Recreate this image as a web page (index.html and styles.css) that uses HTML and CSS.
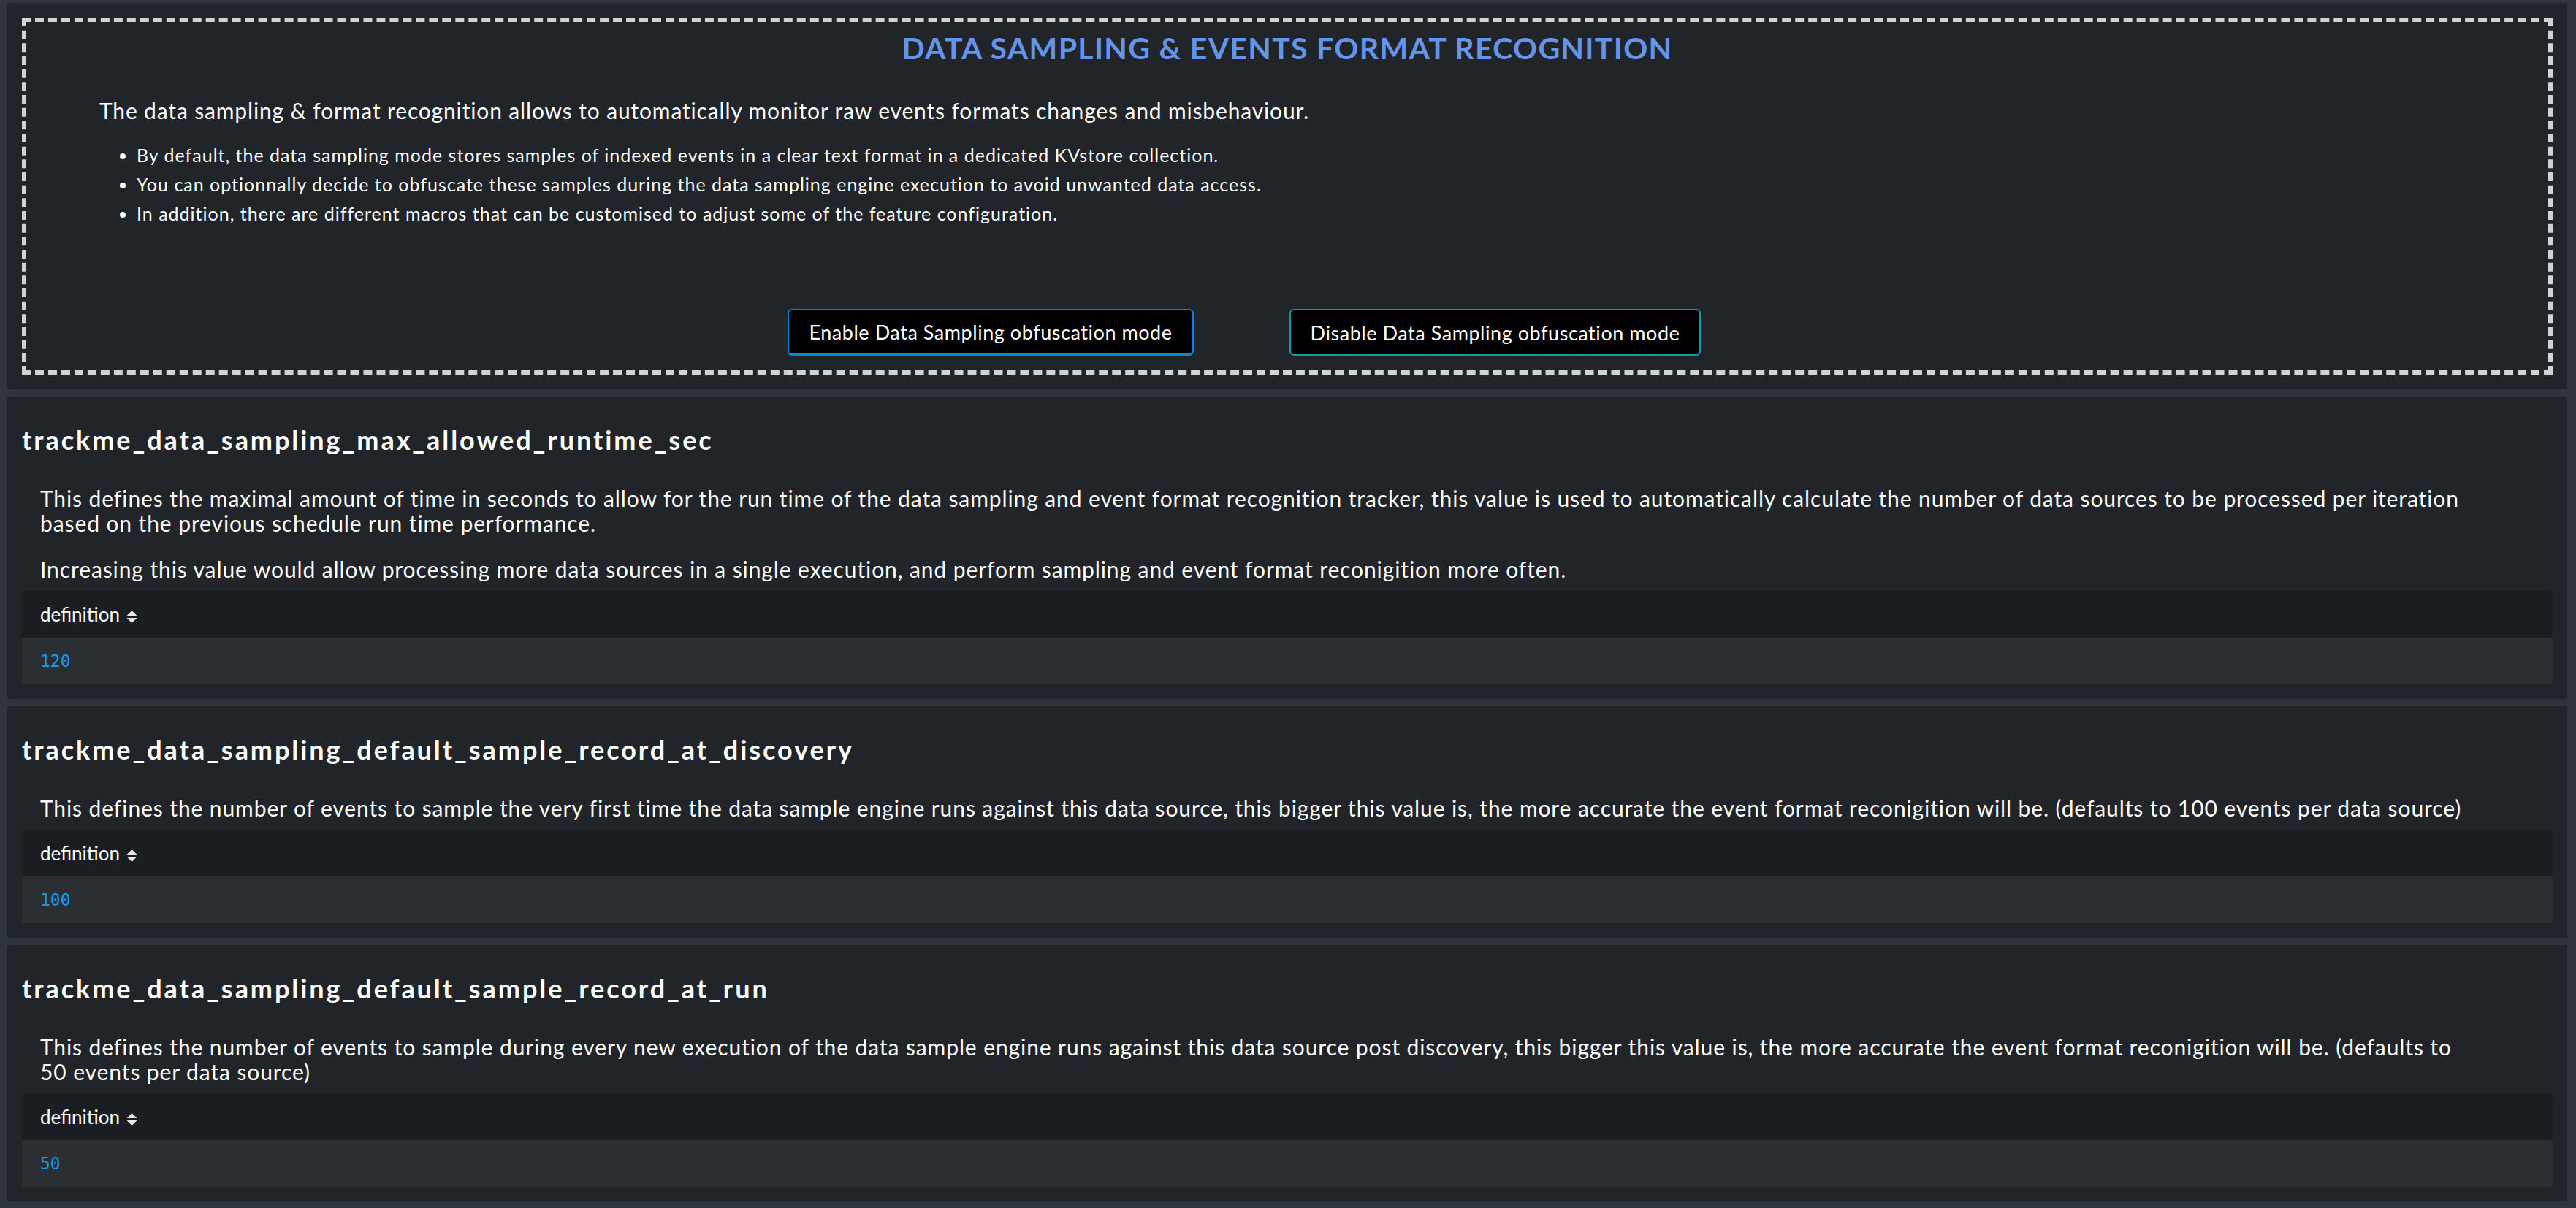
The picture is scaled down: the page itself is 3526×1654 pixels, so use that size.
FILE: index.html
```html
<!DOCTYPE html>
<html lang="en">
<head>
<meta charset="utf-8">
<title>Data Sampling &amp; Events Format Recognition</title>
<link rel="stylesheet" href="styles.css">
</head>
<body>
<section class="panel panel-intro">
  <div class="dashed">
    <h1 class="title">DATA SAMPLING &amp; EVENTS FORMAT RECOGNITION</h1>
    <p class="intro">The data sampling &amp; format recognition allows to automatically monitor raw events formats changes and misbehaviour.</p>
    <ul class="bullets">
      <li>By default, the data sampling mode stores samples of indexed events in a clear text format in a dedicated KVstore collection.</li>
      <li>You can optionnally decide to obfuscate these samples during the data sampling engine execution to avoid unwanted data access.</li>
      <li>In addition, there are different macros that can be customised to adjust some of the feature configuration.</li>
    </ul>
    <div class="actions">
      <button class="btn btn-enable">Enable Data Sampling obfuscation mode</button>
      <button class="btn btn-disable">Disable Data Sampling obfuscation mode</button>
    </div>
  </div>
</section>

<section class="panel">
  <h2 class="macro">trackme_data_sampling_max_allowed_runtime_sec</h2>
  <div class="desc">
    <p>This defines the maximal amount of time in seconds to allow for the run time of the data sampling and event format recognition tracker, this value is used to automatically calculate the number of data sources to be processed per iteration<br>based on the previous schedule run time performance.</p>
    <p>Increasing this value would allow processing more data sources in a single execution, and perform sampling and event format reconigition more often.</p>
  </div>
  <table class="def">
    <thead><tr><th>definition<svg class="sort" viewBox="0 0 15 17" width="15" height="17"><path d="M7.5 0 L14.5 7 L0.5 7 Z M0.5 10 L14.5 10 L7.5 17 Z"/></svg></th></tr></thead>
    <tbody><tr><td>120</td></tr></tbody>
  </table>
</section>

<section class="panel">
  <h2 class="macro">trackme_data_sampling_default_sample_record_at_discovery</h2>
  <div class="desc">
    <p>This defines the number of events to sample the very first time the data sample engine runs against this data source, this bigger this value is, the more accurate the event format reconigition will be. (defaults to 100 events per data source)</p>
  </div>
  <table class="def">
    <thead><tr><th>definition<svg class="sort" viewBox="0 0 15 17" width="15" height="17"><path d="M7.5 0 L14.5 7 L0.5 7 Z M0.5 10 L14.5 10 L7.5 17 Z"/></svg></th></tr></thead>
    <tbody><tr><td>100</td></tr></tbody>
  </table>
</section>

<section class="panel">
  <h2 class="macro">trackme_data_sampling_default_sample_record_at_run</h2>
  <div class="desc">
    <p>This defines the number of events to sample during every new execution of the data sample engine runs against this data source post discovery, this bigger this value is, the more accurate the event format reconigition will be. (defaults to<br>50 events per data source)</p>
  </div>
  <table class="def">
    <thead><tr><th>definition<svg class="sort" viewBox="0 0 15 17" width="15" height="17"><path d="M7.5 0 L14.5 7 L0.5 7 Z M0.5 10 L14.5 10 L7.5 17 Z"/></svg></th></tr></thead>
    <tbody><tr><td>50</td></tr></tbody>
  </table>
</section>
</body>
</html>
```

FILE: styles.css
```css
html, body {
  margin: 0;
}
body {
  background: #2f353d;
  padding: 4px 12px 8px 10px;
  font-family: Lato, "Liberation Sans", sans-serif;
  color: #ffffff;
}
.panel {
  background: #212529;
  padding: 39px 20px 20px;
}
.panel + .panel {
  margin-top: 10px;
}
.panel-intro {
  padding: 20px;
}
.dashed {
  border: 6px dashed #d2d2d2;
  padding: 12px 0 20px;
}
.title {
  margin: 0;
  text-align: center;
  font-size: 41px;
  line-height: 48px;
  font-weight: 700;
  letter-spacing: 1.3px;
  color: #6495ed;
}
.intro {
  margin: 41px 0 0 100px;
  font-size: 30px;
  line-height: 40px;
  letter-spacing: 0.85px;
}
.bullets {
  margin: 21px 0 0 100px;
  padding-left: 51px;
  font-size: 25px;
  line-height: 40px;
  letter-spacing: 1px;
}
.actions {
  display: flex;
  justify-content: center;
  gap: 131px;
  padding-right: 118px;
  margin-top: 111px;
}
.btn {
  box-sizing: border-box;
  height: 64px;
  padding: 0;
  background: #000000;
  color: #ffffff;
  font-family: Lato, "Liberation Sans", sans-serif;
  font-size: 27px;
  letter-spacing: 0.55px;
  border: 2px solid #0b7ee8;
  border-radius: 6px;
}
.btn-enable {
  width: 556px;
  border-bottom: 3px solid #0a8bd0;
}
.btn-disable {
  width: 563px;
  border-color: #1798a8;
}
.macro {
  margin: 0 0 43px;
  font-size: 36px;
  line-height: 40px;
  font-weight: 700;
  letter-spacing: 2.95px;
}
.desc p {
  margin: 0 0 29px 25px;
  font-size: 30px;
  line-height: 34px;
  letter-spacing: 0.9px;
}
.desc p:last-child {
  margin-bottom: 13px;
}
.def {
  width: 100%;
  border-collapse: collapse;
}
.def th {
  background: #1a1d21;
  height: 64px;
  padding: 0 25px;
  text-align: left;
  font-weight: 400;
  font-size: 26px;
}
.sort {
  margin-left: 9px;
  vertical-align: -2px;
  fill: #e6e6e6;
}
.def td {
  background: #2b2f33;
  height: 64px;
  padding: 0 25px;
  font-family: "DejaVu Sans Mono", "Liberation Mono", monospace;
  font-size: 23px;
  color: #1a98ea;
}
```
